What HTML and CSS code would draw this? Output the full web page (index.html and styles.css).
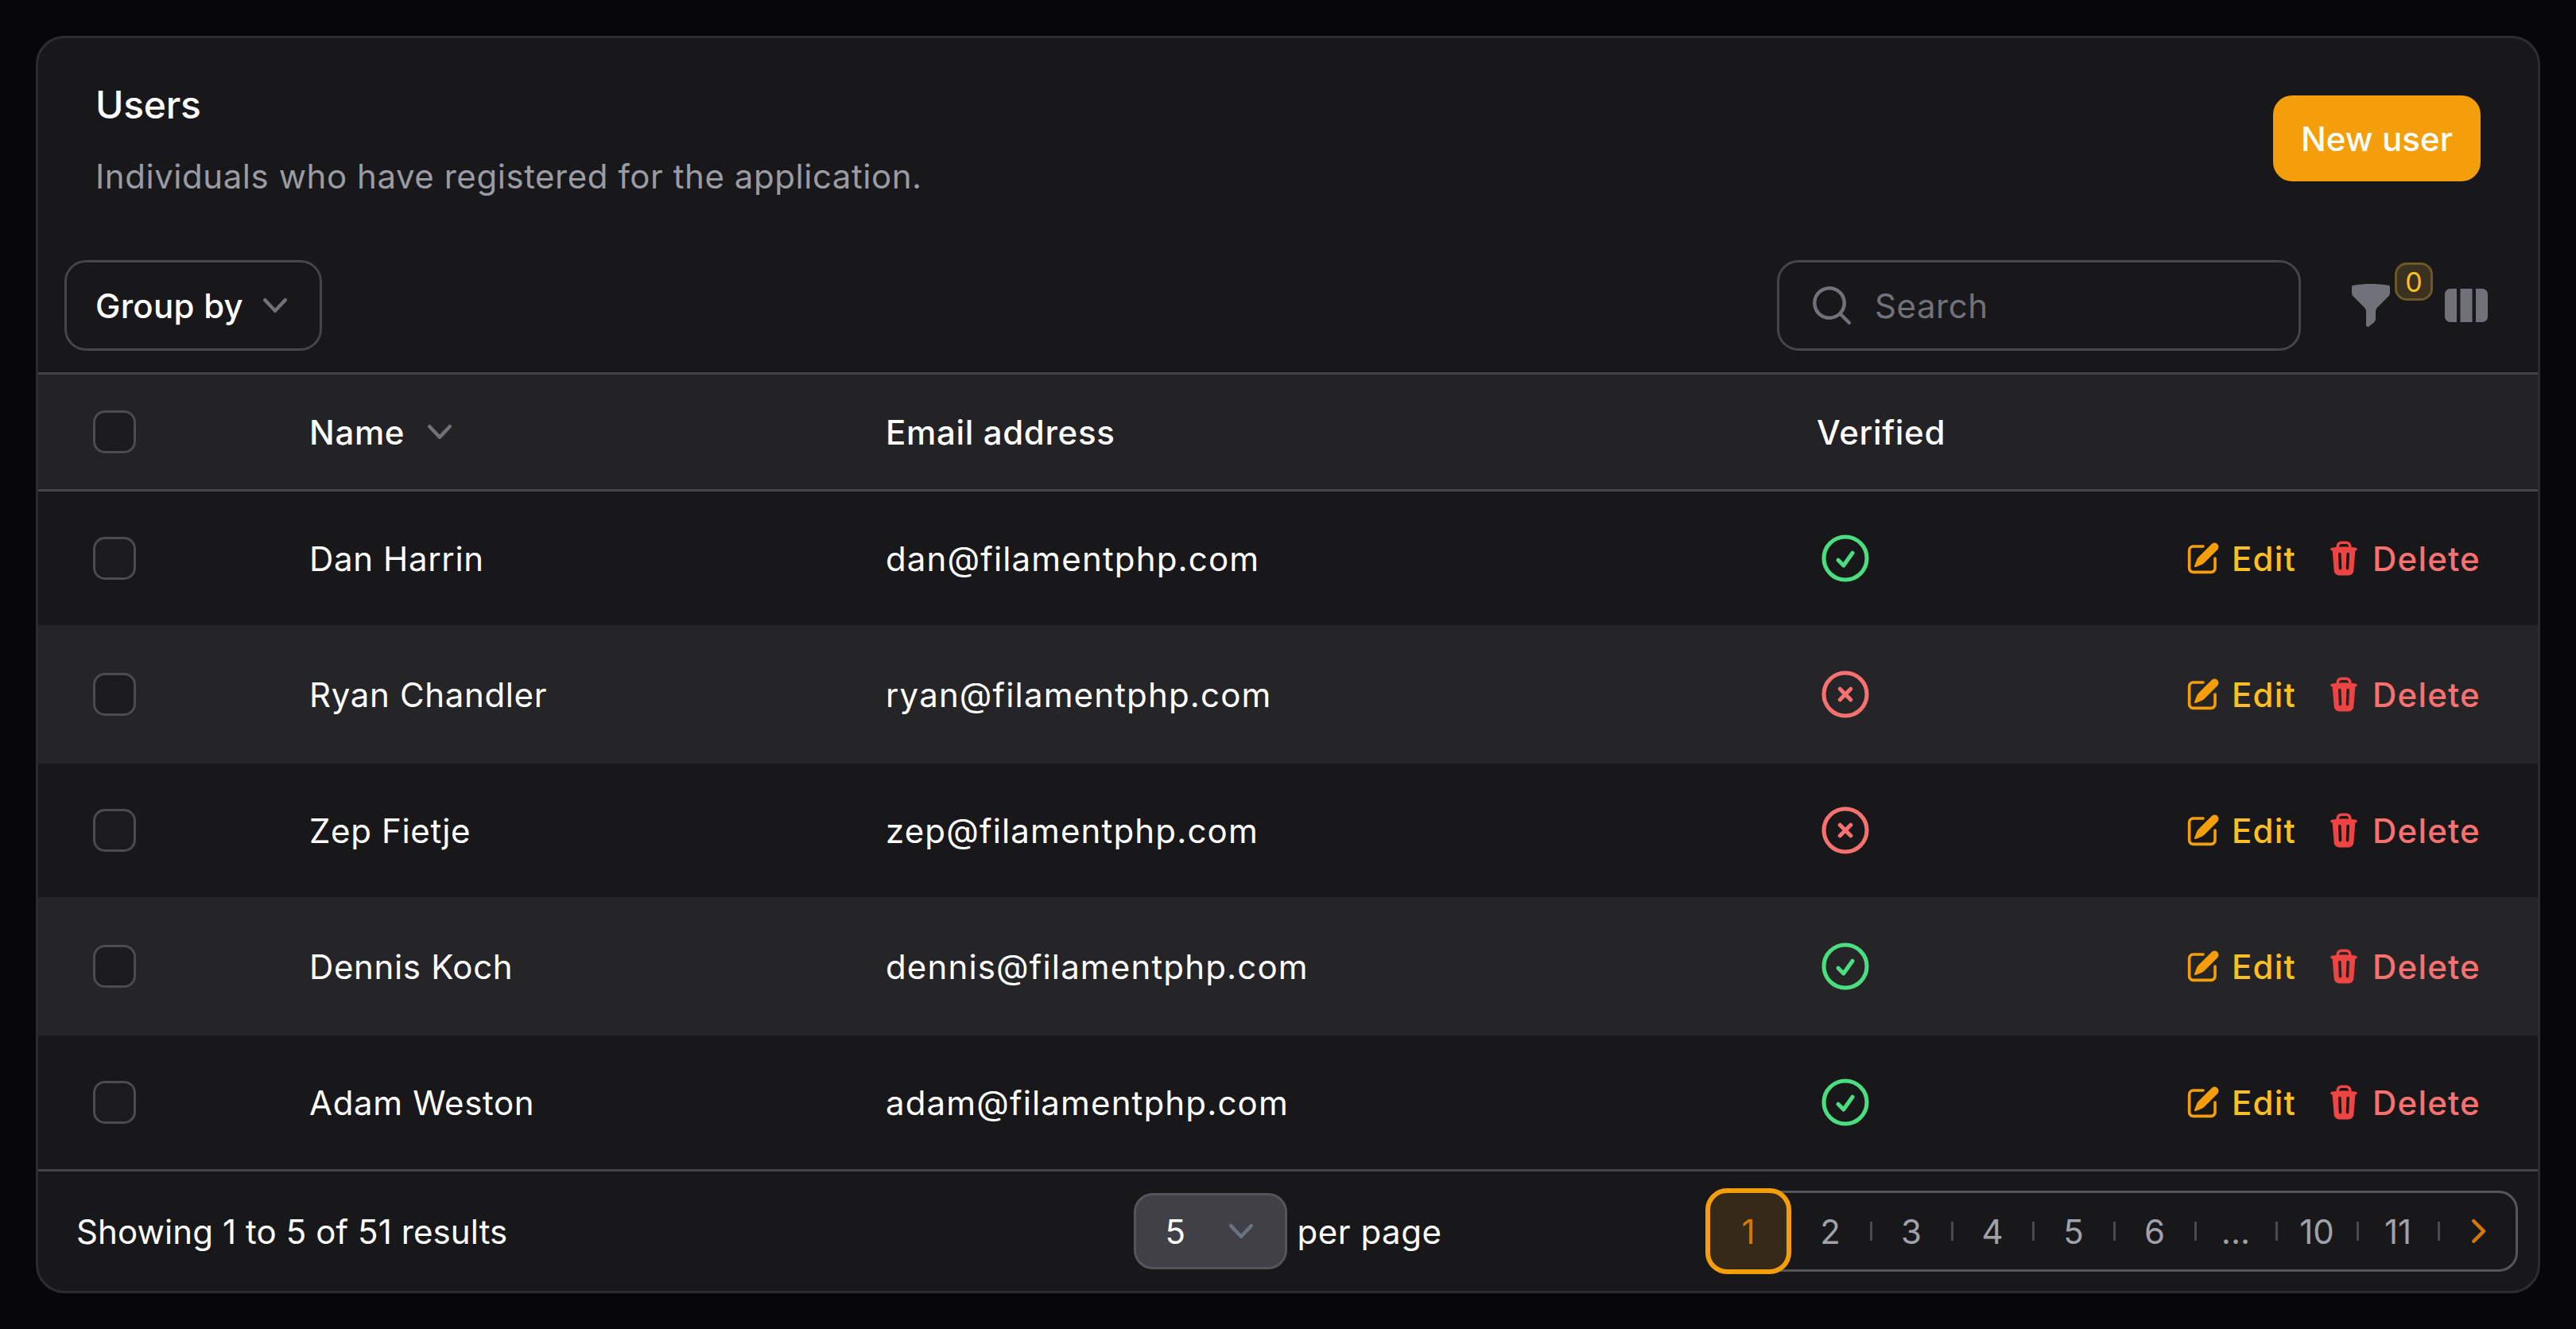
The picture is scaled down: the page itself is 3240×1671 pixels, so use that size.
FILE: index.html
```html
<!DOCTYPE html>
<html lang="en">
<head>
    <meta charset="UTF-8">
    <meta name="viewport" content="width=device-width, initial-scale=1.0">
    <title>Users</title>
    <link rel="stylesheet" href="styles.css">
</head>
<body>

    <svg class="icon-defs" xmlns="http://www.w3.org/2000/svg">
        <symbol id="chevron-down" viewBox="0 0 20 20"><path fill="currentColor" fill-rule="evenodd" clip-rule="evenodd" d="M5.23 7.21a.75.75 0 0 1 1.06.02L10 11.168l3.71-3.938a.75.75 0 1 1 1.08 1.04l-4.25 4.5a.75.75 0 0 1-1.08 0l-4.25-4.5a.75.75 0 0 1 .02-1.06Z"/></symbol>
        <symbol id="chevron-right" viewBox="0 0 20 20"><path fill="currentColor" fill-rule="evenodd" clip-rule="evenodd" d="M8.22 5.22a.75.75 0 0 1 1.06 0l4.25 4.25a.75.75 0 0 1 0 1.06l-4.25 4.25a.75.75 0 0 1-1.06-1.06L11.94 10 8.22 6.28a.75.75 0 0 1 0-1.06Z"/></symbol>
        <symbol id="search" viewBox="0 0 20 20"><path fill="currentColor" fill-rule="evenodd" clip-rule="evenodd" d="M9 3.5a5.5 5.5 0 1 0 0 11 5.5 5.5 0 0 0 0-11ZM2 9a7 7 0 1 1 12.452 4.391l3.328 3.329a.75.75 0 1 1-1.06 1.06l-3.329-3.328A7 7 0 0 1 2 9Z"/></symbol>
        <symbol id="funnel" viewBox="0 0 20 20"><path fill="currentColor" d="M2.628 1.601C5.028 1.206 7.49 1 10 1s4.973.206 7.372.601a.75.75 0 0 1 .628.74v2.288a2.25 2.25 0 0 1-.659 1.59l-4.682 4.683a2.25 2.25 0 0 0-.659 1.59v3.037c0 .684-.31 1.33-.844 1.757l-1.937 1.55A.75.75 0 0 1 8 18.25v-5.757a2.25 2.25 0 0 0-.659-1.591L2.659 6.22A2.25 2.25 0 0 1 2 4.629V2.34a.75.75 0 0 1 .628-.74Z"/></symbol>
        <symbol id="columns" viewBox="0 0 20 20"><path fill="currentColor" d="M14 17h2.75A2.25 2.25 0 0 0 19 14.75v-9.5A2.25 2.25 0 0 0 16.75 3H14v14ZM12.5 3h-5v14h5V3ZM3.25 3H6v14H3.25A2.25 2.25 0 0 1 1 14.75v-9.5A2.25 2.25 0 0 1 3.25 3Z"/></symbol>
        <symbol id="check-circle" viewBox="0 0 24 24"><path fill="none" stroke="currentColor" stroke-width="1.7" stroke-linecap="round" stroke-linejoin="round" d="M9 12.75 11.25 15 15 9.75M21 12a9 9 0 1 1-18 0 9 9 0 0 1 18 0Z"/></symbol>
        <symbol id="x-circle" viewBox="0 0 24 24"><path fill="none" stroke="currentColor" stroke-width="1.7" stroke-linecap="round" stroke-linejoin="round" d="m9.75 9.75 4.5 4.5m0-4.5-4.5 4.5M21 12a9 9 0 1 1-18 0 9 9 0 0 1 18 0Z"/></symbol>
        <symbol id="pencil" viewBox="0 0 20 20"><path fill="currentColor" d="m5.433 13.917 1.262-3.155A4 4 0 0 1 7.58 9.42l6.92-6.918a2.121 2.121 0 0 1 3 3l-6.92 6.918c-.383.383-.84.685-1.343.886l-3.154 1.262a.5.5 0 0 1-.65-.65Z"/><path fill="currentColor" d="M3.5 5.75c0-.69.56-1.25 1.25-1.25H10A.75.75 0 0 0 10 3H4.75A2.75 2.75 0 0 0 2 5.75v9.5A2.75 2.75 0 0 0 4.75 18h9.5A2.75 2.75 0 0 0 17 15.25V10a.75.75 0 0 0-1.5 0v5.25c0 .69-.56 1.25-1.25 1.25h-9.5c-.69 0-1.25-.56-1.25-1.25v-9.5Z"/></symbol>
        <symbol id="trash" viewBox="0 0 20 20"><path fill="currentColor" fill-rule="evenodd" clip-rule="evenodd" d="M8.75 1A2.75 2.75 0 0 0 6 3.75v.443c-.795.077-1.584.176-2.365.298a.75.75 0 1 0 .23 1.482l.149-.022.841 10.518A2.75 2.75 0 0 0 7.596 19h4.807a2.75 2.75 0 0 0 2.742-2.53l.841-10.52.149.023a.75.75 0 0 0 .23-1.482A41.03 41.03 0 0 0 14 4.193V3.75A2.75 2.75 0 0 0 11.25 1h-2.5ZM10 4c.84 0 1.673.025 2.5.075V3.75c0-.69-.56-1.25-1.25-1.25h-2.5c-.69 0-1.25.56-1.25 1.25v.325C8.327 4.025 9.16 4 10 4ZM8.58 7.72a.75.75 0 0 0-1.5.06l.3 7.5a.75.75 0 1 0 1.5-.06l-.3-7.5Zm4.34.06a.75.75 0 1 0-1.5-.06l-.3 7.5a.75.75 0 1 0 1.5.06l.3-7.5Z"/></symbol>
    </svg>

    <div class="card">
        <div class="card-header">
            <div>
                <h1 class="title">Users</h1>
                <p class="subtitle">Individuals who have registered for the application.</p>
            </div>
            <button class="btn-new">New user</button>
        </div>

        <div class="toolbar">
            <button class="group-by">Group by <svg class="icon-60 muted"><use href="#chevron-down"/></svg></button>
            <div class="search">
                <svg class="icon-60 muted"><use href="#search"/></svg>
                <span class="search-text">Search</span>
            </div>
            <div class="filter">
                <svg class="icon-60 muted"><use href="#funnel"/></svg>
                <span class="badge">0</span>
            </div>
            <svg class="icon-60 muted"><use href="#columns"/></svg>
        </div>

        <div class="row row-head">
            <span class="checkbox"></span>
            <span class="sortable">Name <svg class="icon-60 muted"><use href="#chevron-down"/></svg></span>
            <span>Email address</span>
            <span class="verified-head">Verified</span>
        </div>

        <div class="row">
            <span class="checkbox"></span>
            <span>Dan Harrin</span>
            <span class="email">dan@filamentphp.com</span>
            <svg class="icon-72 yes"><use href="#check-circle"/></svg>
            <div class="actions">
                <a class="action edit"><svg class="icon-48"><use href="#pencil"/></svg>Edit</a>
                <a class="action delete"><svg class="icon-48"><use href="#trash"/></svg>Delete</a>
            </div>
        </div>
        <div class="row row-alt">
            <span class="checkbox"></span>
            <span>Ryan Chandler</span>
            <span class="email">ryan@filamentphp.com</span>
            <svg class="icon-72 no"><use href="#x-circle"/></svg>
            <div class="actions">
                <a class="action edit"><svg class="icon-48"><use href="#pencil"/></svg>Edit</a>
                <a class="action delete"><svg class="icon-48"><use href="#trash"/></svg>Delete</a>
            </div>
        </div>
        <div class="row">
            <span class="checkbox"></span>
            <span>Zep Fietje</span>
            <span class="email">zep@filamentphp.com</span>
            <svg class="icon-72 no"><use href="#x-circle"/></svg>
            <div class="actions">
                <a class="action edit"><svg class="icon-48"><use href="#pencil"/></svg>Edit</a>
                <a class="action delete"><svg class="icon-48"><use href="#trash"/></svg>Delete</a>
            </div>
        </div>
        <div class="row row-alt">
            <span class="checkbox"></span>
            <span>Dennis Koch</span>
            <span class="email">dennis@filamentphp.com</span>
            <svg class="icon-72 yes"><use href="#check-circle"/></svg>
            <div class="actions">
                <a class="action edit"><svg class="icon-48"><use href="#pencil"/></svg>Edit</a>
                <a class="action delete"><svg class="icon-48"><use href="#trash"/></svg>Delete</a>
            </div>
        </div>
        <div class="row row-last">
            <span class="checkbox"></span>
            <span>Adam Weston</span>
            <span class="email">adam@filamentphp.com</span>
            <svg class="icon-72 yes"><use href="#check-circle"/></svg>
            <div class="actions">
                <a class="action edit"><svg class="icon-48"><use href="#pencil"/></svg>Edit</a>
                <a class="action delete"><svg class="icon-48"><use href="#trash"/></svg>Delete</a>
            </div>
        </div>

        <div class="footer">
            <span class="showing">Showing 1 to 5 of 51 results</span>
            <div class="per-page">
                <div class="select">5 <svg class="icon-60 select-arrow"><use href="#chevron-down"/></svg></div>
                <span>per page</span>
            </div>
            <div class="pages">
                <span class="page active">1</span>
                <span class="page">2</span>
                <span class="page">3</span>
                <span class="page">4</span>
                <span class="page">5</span>
                <span class="page">6</span>
                <span class="page">...</span>
                <span class="page">10</span>
                <span class="page">11</span>
                <span class="page page-next"><svg class="icon-60"><use href="#chevron-right"/></svg></span>
            </div>
        </div>
    </div>

</body>
</html>
```

FILE: styles.css
```css
* {
    box-sizing: border-box;
}
body {
    margin: 0;
    height: 1671px;
    padding: 45px;
    background: #07070a;
    color: #fff;
    font-family: Inter, "Liberation Sans", sans-serif;
    font-size: 42px;
    letter-spacing: 0.55px;
    overflow: hidden;
}
.icon-defs {
    display: none;
}
.icon-48 {
    width: 48px;
    height: 48px;
    flex: none;
}
.icon-60 {
    width: 60px;
    height: 60px;
    flex: none;
}
.icon-72 {
    width: 72px;
    height: 72px;
    flex: none;
}
.muted {
    color: #71717a;
}
.yes {
    color: #4ade80;
}
.no {
    color: #f87171;
}

.card {
    border: 3px solid #2d2d30;
    border-radius: 36px;
    background: #18181b;
}
.card-header {
    display: flex;
    justify-content: space-between;
    align-items: center;
    padding: 48px 72px;
}
.title {
    margin: 0;
    font-size: 48px;
    font-weight: 500;
    letter-spacing: -0.3px;
    line-height: 72px;
}
.subtitle {
    margin: 24px 0 0;
    color: #9b9ba3;
    line-height: 60px;
}
.btn-new {
    width: 261px;
    height: 108px;
    border: 0;
    border-radius: 24px;
    background: #f59e0b;
    color: #fff;
    font: inherit;
    font-weight: 500;
    letter-spacing: 0.05px;
}

.toolbar {
    display: flex;
    align-items: center;
    height: 171px;
    padding: 0 60px 0 33px;
    border-bottom: 3px solid #434347;
}
.group-by {
    display: flex;
    align-items: center;
    gap: 10px;
    width: 324px;
    height: 114px;
    padding: 0 0 0 36px;
    border: 3px solid #46464a;
    border-radius: 27px;
    background: none;
    color: #fff;
    font: inherit;
    font-weight: 500;
    letter-spacing: 0.25px;
}
.search {
    display: flex;
    align-items: center;
    gap: 24px;
    width: 659px;
    height: 114px;
    margin-left: auto;
    padding-left: 36px;
    border: 3px solid #46464a;
    border-radius: 27px;
}
.search-text {
    color: #71717a;
}
.filter {
    position: relative;
    display: flex;
    margin: 0 60px 0 58px;
}
.badge {
    position: absolute;
    top: -24px;
    left: 60px;
    display: flex;
    align-items: center;
    justify-content: center;
    width: 48px;
    height: 48px;
    border: 3px solid #6b5a27;
    border-radius: 15px;
    background: #3a3120;
    color: #fbbf24;
    font-size: 34px;
    letter-spacing: 0;
}

.row {
    display: grid;
    grid-template-columns: 269px 725px 1171px 72px 1fr;
    align-items: center;
    height: 171px;
    padding: 0 72px;
    border-bottom: 3px solid #252528;
    letter-spacing: 0.65px;
}
.row-alt {
    background: #252528;
}
.row-last {
    border-bottom-color: #434347;
}
.row-head {
    height: 147px;
    background: #232326;
    border-bottom-color: #434347;
    font-weight: 500;
}
.email {
    letter-spacing: 1.15px;
}
.verified-head {
    white-space: nowrap;
}
.checkbox {
    display: block;
    width: 48px;
    height: 48px;
    border-radius: 12px;
    background: #1b1b1e;
    box-shadow: 0 0 0 3px #4b4b50;
}
.sortable {
    display: flex;
    align-items: center;
    gap: 14px;
}
.actions {
    display: flex;
    justify-content: flex-end;
    gap: 36px;
}
.action {
    display: flex;
    align-items: center;
    gap: 12px;
    font-weight: 500;
    letter-spacing: 1.2px;
}
.edit {
    color: #fbbf24;
}
.edit svg {
    color: #f59e0b;
}
.delete {
    color: #f87171;
}
.delete svg {
    color: #ef4444;
}

.footer {
    display: grid;
    grid-template-columns: 1fr auto 1fr;
    align-items: center;
    height: 150px;
    padding: 0 25px;
}
.showing {
    padding-left: 23px;
    letter-spacing: 0.1px;
}
.per-page {
    display: flex;
    align-items: center;
    gap: 12px;
}
.select {
    display: flex;
    align-items: center;
    justify-content: space-between;
    width: 193px;
    height: 96px;
    padding: 0 25px 0 36px;
    border: 3px solid #55555b;
    border-radius: 24px;
    background: #404046;
}
.select-arrow {
    color: #6b7280;
}
.pages {
    display: flex;
    justify-self: end;
    width: 1019px;
    height: 102px;
    border: 3px solid #55555a;
    border-radius: 24px;
    letter-spacing: 0;
}
.page {
    position: relative;
    display: flex;
    align-items: center;
    justify-content: center;
    width: 102px;
    padding-right: 4px;
    color: #a1a1aa;
}
.page::after {
    content: "";
    position: absolute;
    right: 0;
    top: 36px;
    width: 3px;
    height: 24px;
    background: #4a4a4f;
}
.page.active {
    flex: none;
    width: 108px;
    height: 108px;
    margin: -6px 0 -6px -6px;
    padding-right: 0;
    border: 6px solid #f59e0b;
    border-radius: 27px;
    background: #35291a;
    color: #d97706;
}
.page.active::after,
.page-next::after {
    display: none;
}
.page-next {
    flex: 1;
    color: #d97706;
}
```
